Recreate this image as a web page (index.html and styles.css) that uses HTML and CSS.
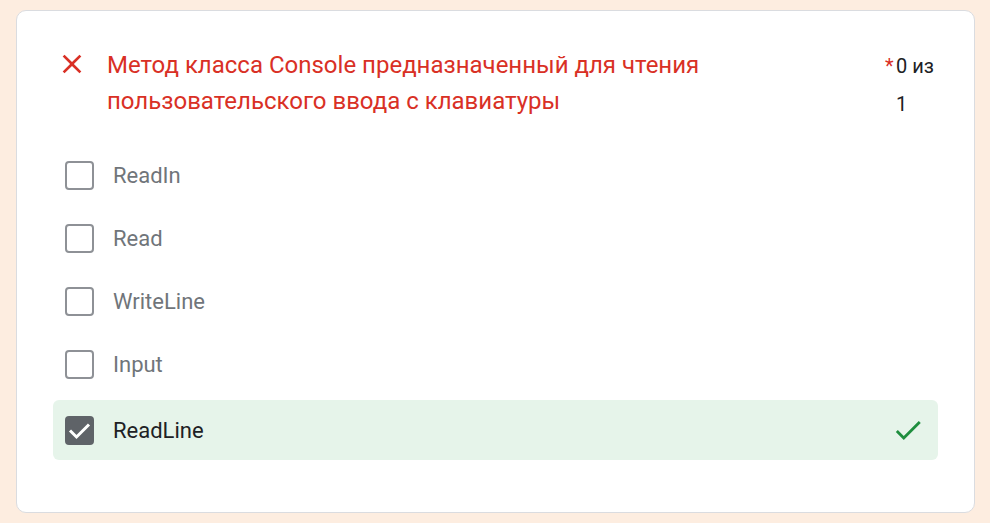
FILE: index.html
```html
<!DOCTYPE html>
<html lang="ru">
<head>
<meta charset="utf-8">
<link rel="stylesheet" href="styles.css">
</head>
<body>
<div class="card">
  <div class="header">
    <svg class="x-icon" viewBox="0 0 24 24" width="32" height="32"><path fill="#d93025" d="M19 6.41 17.59 5 12 10.59 6.41 5 5 6.41 10.59 12 5 17.59 6.41 19 12 13.41 17.59 19 19 17.59 13.41 12z"/></svg>
    <div class="title">Метод класса Console предназначенный для чтения пользовательского ввода с клавиатуры</div>
    <div class="score"><span class="star">*</span>0 из 1</div>
  </div>
  <div class="options">
    <div class="opt"><span class="box"></span><span class="label">ReadIn</span></div>
    <div class="opt"><span class="box"></span><span class="label">Read</span></div>
    <div class="opt"><span class="box"></span><span class="label">WriteLine</span></div>
    <div class="opt"><span class="box"></span><span class="label">Input</span></div>
    <div class="opt correct">
      <span class="box checked"><svg viewBox="0 0 29 29" width="29" height="29"><path fill="none" stroke="#fff" stroke-width="3" d="M5 14.5 11.5 21 24 8.5"/></svg></span>
      <span class="label">ReadLine</span>
      <svg class="ok" viewBox="0 0 24 24" width="34" height="34"><path fill="#1e8e3e" d="M9 16.17 4.83 12l-1.42 1.41L9 19 21 7l-1.41-1.41z"/></svg>
    </div>
  </div>
</div>
</body>
</html>
```
FILE: styles.css
```css
html, body {
  margin: 0;
  padding: 0;
}
body {
  background: #fdede0;
  font-family: Roboto, "Noto Sans", sans-serif;
  width: 990px;
  height: 523px;
  overflow: hidden;
  padding-top: 10px;
  box-sizing: border-box;
}
.card {
  margin-left: 16px;
  width: 959px;
  height: 503px;
  box-sizing: border-box;
  background: #fff;
  border: 1px solid #dadce0;
  border-radius: 10px;
  padding: 36px 36px 0 36px;
}
.header {
  display: flex;
  align-items: flex-start;
}
.x-icon {
  flex: none;
  margin: 1px 0 0 3px;
}
.title {
  margin-left: 19px;
  width: 640px;
  color: #d93025;
  font-size: 24px;
  line-height: 36px;
}
.score {
  margin-left: auto;
  margin-right: 0;
  width: 42px;
  position: relative;
  font-size: 20px;
  line-height: 38px;
  color: #202124;
}
.star {
  color: #d93025;
  position: absolute;
  left: -11px;
  top: 0;
}
.options {
  margin-top: 22px;
  display: flex;
  flex-direction: column;
  gap: 3px;
}
.opt {
  height: 60px;
  display: flex;
  align-items: center;
  padding: 0 13px 0 12px;
  border-radius: 6px;
}
.box {
  width: 29px;
  height: 29px;
  box-sizing: border-box;
  border: 2.5px solid #8e9196;
  border-radius: 4px;
  flex: none;
  display: flex;
  align-items: center;
  justify-content: center;
}
.box.checked {
  background: #5f6368;
  border: none;
}
.label {
  margin-left: 19px;
  font-size: 22px;
  color: #70757a;
}
.correct {
  margin-top: 3px;
  background: #e6f4ea;
}
.correct .label {
  color: #202124;
}
.ok {
  margin-left: auto;
}
```
